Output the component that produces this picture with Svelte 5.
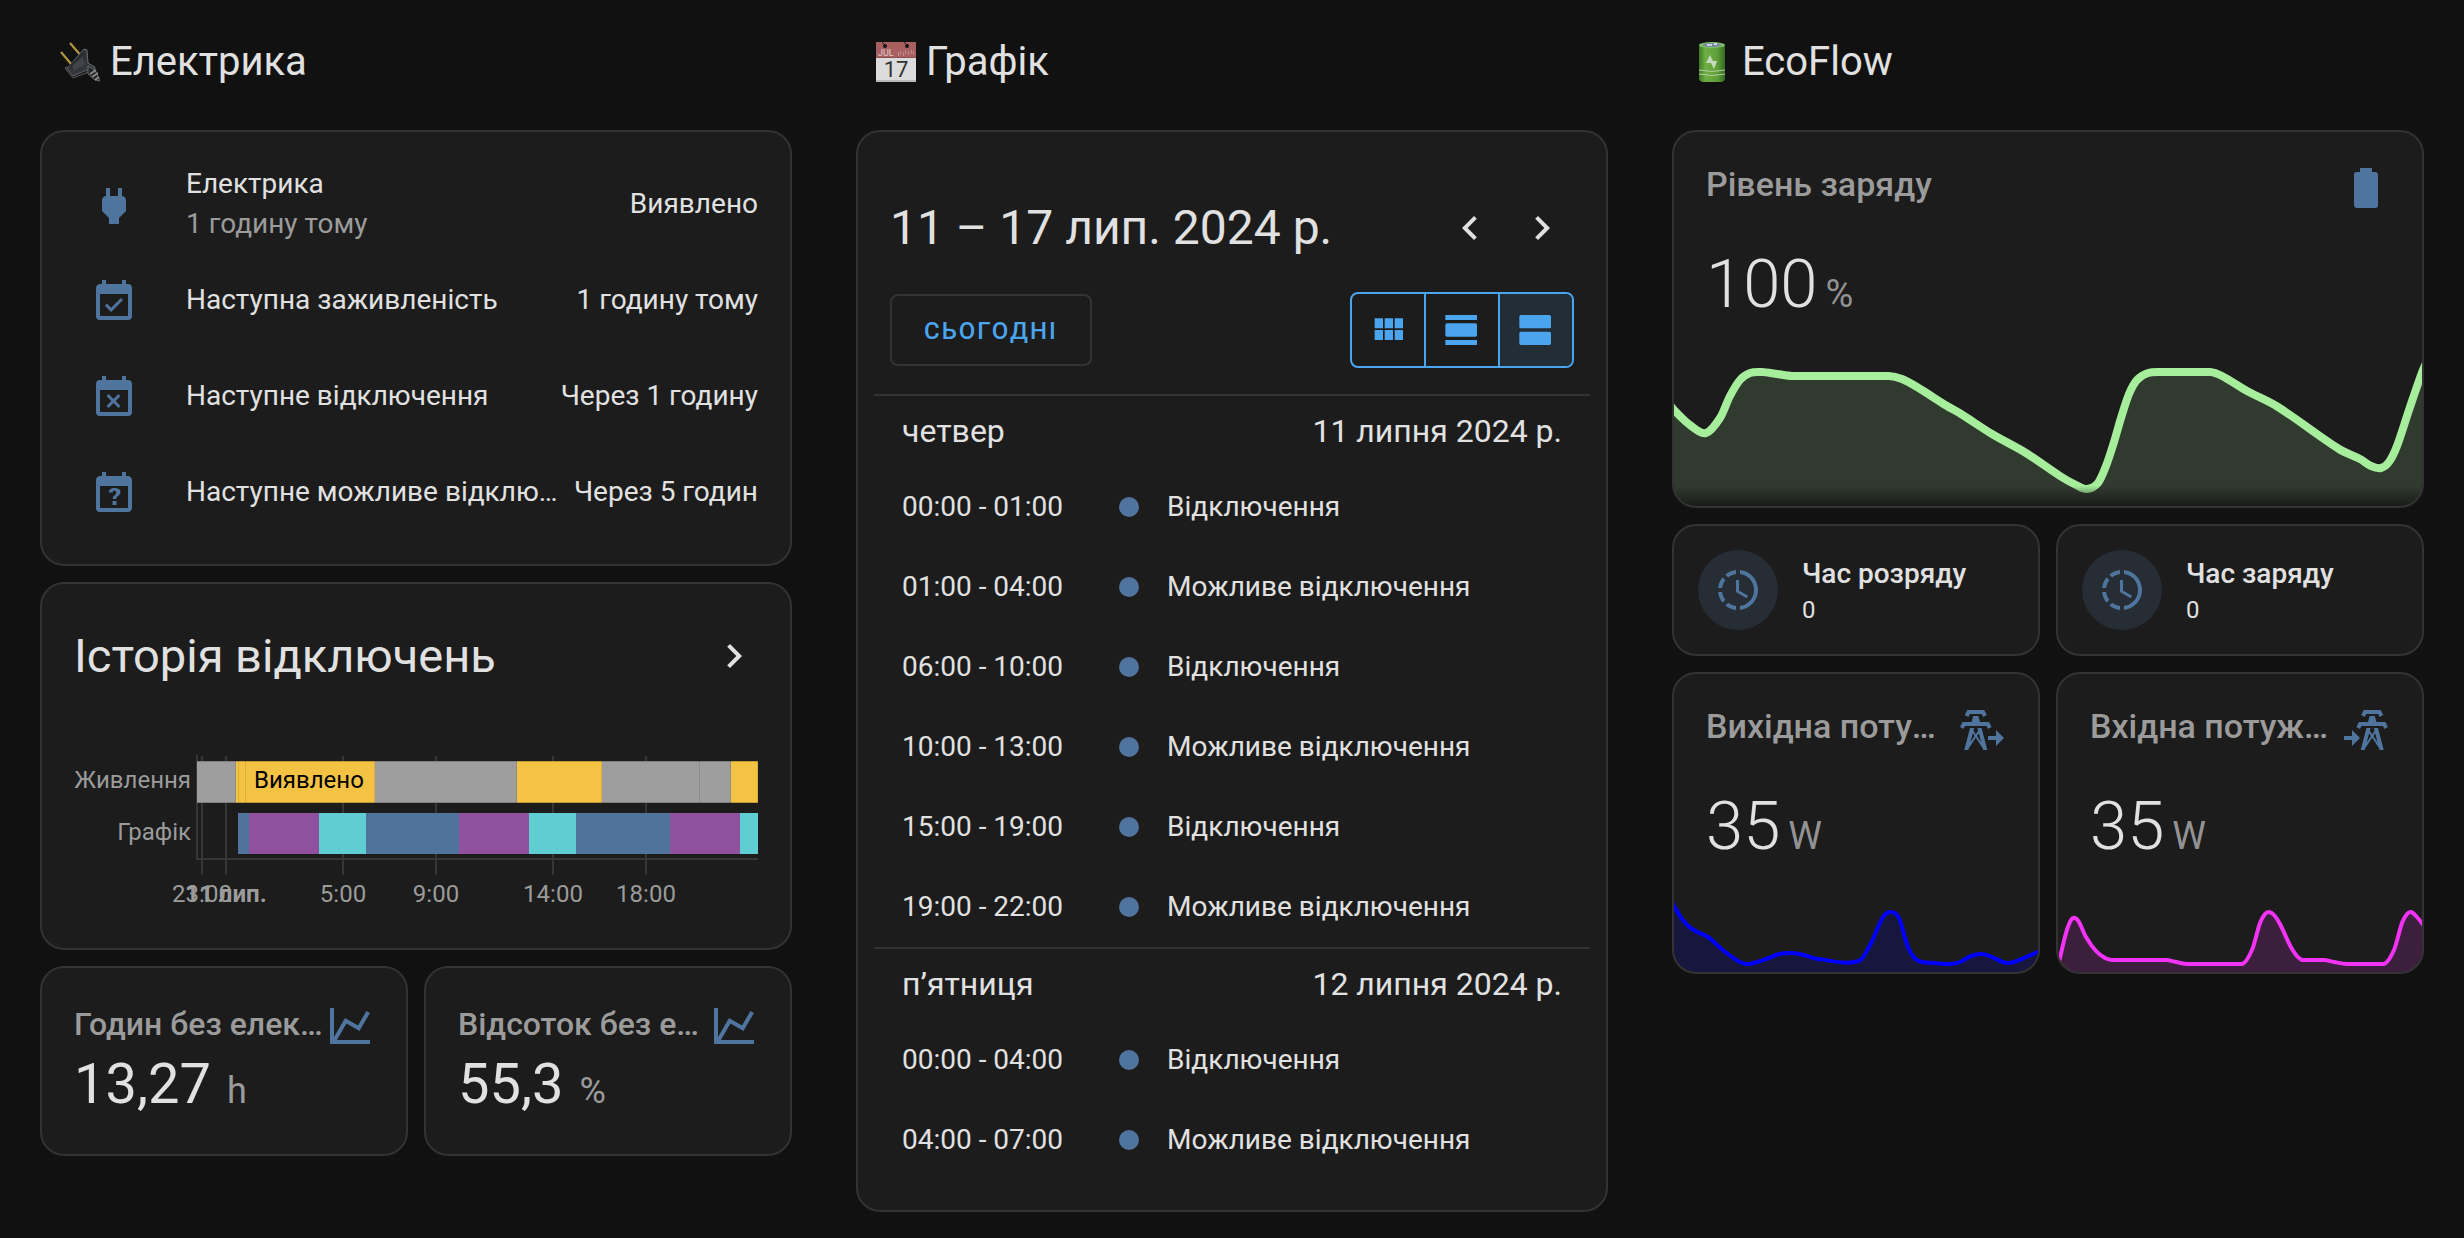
<script>
  const icons = {
    plug: 'M16,7V3H14V7H10V3H8V7H8C7,7 6,8 6,9V14.5L9.5,18V21H14.5V18L18,14.5V9C18,8 17,7 16,7Z',
    calendarCheck:
      'M19,19H5V8H19M19,3H18V1H16V3H8V1H6V3H5C3.89,3 3,3.9 3,5V19A2,2 0 0,0 5,21H19A2,2 0 0,0 21,19V5A2,2 0 0,0 19,3M16.53,11.06L15.47,10L10.59,14.88L8.47,12.76L7.41,13.82L10.59,17L16.53,11.06Z',
    calendarRemove:
      'M19,19H5V8H19M19,3H18V1H16V3H8V1H6V3H5A2,2 0 0,0 3,5V19A2,2 0 0,0 5,21H19A2,2 0 0,0 21,19V5A2,2 0 0,0 19,3M9.31,17L11.75,14.56L14.19,17L15.25,15.94L12.81,13.5L15.25,11.06L14.19,10L11.75,12.44L9.31,10L8.25,11.06L10.69,13.5L8.25,15.94L9.31,17Z',
    calendarQuestion:
      'M6,1V3H5C3.89,3 3,3.89 3,5V19A2,2 0 0,0 5,21H19C20.11,21 21,20.11 21,19V5C21,3.89 20.11,3 19,3H18V1H16V3H8V1H6M5,8H19V19H5V8M12.19,9C11.32,9 10.62,9.2 10.12,9.59C9.62,10 9.37,10.53 9.37,11.23H11.32C11.33,10.97 11.41,10.77 11.56,10.63C11.71,10.49 11.92,10.42 12.19,10.42C12.47,10.42 12.7,10.5 12.86,10.66C13.02,10.82 13.1,11.03 13.1,11.3C13.1,11.56 13.04,11.78 12.92,11.97C12.8,12.16 12.64,12.33 12.44,12.5C11.99,12.86 11.7,13.15 11.57,13.4C11.44,13.65 11.38,14 11.38,14.5H13.13C13.13,14.17 13.18,13.91 13.27,13.73C13.36,13.54 13.54,13.35 13.79,13.16C14.22,12.91 14.57,12.61 14.83,12.25C15.09,11.88 15.22,11.5 15.22,11.1C15.22,10.45 14.95,9.94 14.42,9.56C13.89,9.19 13.14,9 12.19,9M11.25,15.5V17.5H13.25V15.5H11.25Z',
    chartLine: 'M16,11.78L20.24,4.45L21.97,5.45L16.74,14.5L10.23,10.75L5.46,19H22V21H2V3H4V17.54L9.5,8L16,11.78Z',
    battery:
      'M16.67,4H15V2H9V4H7.33A1.33,1.33 0 0,0 6,5.33V20.67C6,21.4 6.6,22 7.33,22H16.67A1.33,1.33 0 0,0 18,20.67V5.33C18,4.6 17.4,4 16.67,4Z',
    progressClock:
      'M13,2.03V2.05L13,4.05C17.39,4.59 20.5,8.58 19.96,12.97C19.5,16.61 16.64,19.5 13,19.93V21.93C18.5,21.38 22.5,16.5 21.95,11C21.5,6.25 17.73,2.5 13,2.03M11,2.06C9.05,2.25 7.19,3 5.67,4.26L7.1,5.74C8.22,4.84 9.57,4.26 11,4.06V2.06M4.26,5.67C3,7.19 2.25,9.04 2.05,11H4.05C4.24,9.58 4.8,8.23 5.69,7.1L4.26,5.67M2.06,13C2.26,14.96 3.03,16.81 4.27,18.33L5.69,16.9C4.81,15.77 4.24,14.42 4.06,13H2.06M7.1,18.37L5.67,19.74C7.18,21 9.04,21.79 11,22V20C9.58,19.82 8.23,19.25 7.1,18.37M12.5,7V12.25L17,14.92L16.25,16.15L11,13V7H12.5Z',
    towerExport:
      'M5.18,5.45L3.4,4.55L4.66,2H13.13L14.4,4.55L12.62,5.44L11.9,4H5.9L5.18,5.45M15.52,8H10.99L10.2,5H7.6L6.81,8H2.28L1,10.55L2.79,11.44L3.52,10H14.28L15,11.45L16.79,10.56L15.52,8M14.67,22H12.6L12.36,21.1L8.9,15.9L5.43,21.1L5.2,22H3.13L6.02,11H8.09L7.73,12.35L8.9,14.1L10.06,12.35L9.71,11H11.78L14.67,22M8.3,15L7.4,13.65L6.22,18.13L8.3,15M11.58,18.12L10.4,13.64L9.5,15L11.58,18.12M23,16L19,12V15H15V17H19V20L23,16Z',
    towerImport:
      'M11.38,5.45L9.6,4.55L10.86,2H19.33L20.6,4.55L18.82,5.44L18.1,4H12.1L11.38,5.45M21.72,8H17.19L16.4,5H13.8L13.01,8H8.48L7.2,10.55L8.99,11.44L9.72,10H20.48L21.2,11.45L22.99,10.56L21.72,8M20.87,22H18.8L18.56,21.1L15.1,15.9L11.63,21.1L11.4,22H9.33L12.22,11H14.29L13.93,12.35L15.1,14.1L16.26,12.35L15.91,11H17.98L20.87,22M14.5,15L13.6,13.65L12.42,18.13L14.5,15M17.78,18.12L16.6,13.64L15.7,15L17.78,18.12M9,16L5,12V15H1V17H5V20L9,16Z',
    chevronLeft: 'M15.41,16.58L10.83,12L15.41,7.41L14,6L8,12L14,18L15.41,16.58Z',
    chevronRight: 'M8.59,16.58L13.17,12L8.59,7.41L10,6L16,12L10,18L8.59,16.58Z',
    viewModule: 'M16,5V11H21V5M10,11H15V5H10M16,18H21V12H16M10,18H15V12H10M4,18H9V12H4M4,11H9V5H4V11Z',
    viewDay: 'M2,3V6H21V3M20,8H3A1,1 0 0,0 2,9V15A1,1 0 0,0 3,16H20A1,1 0 0,0 21,15V9A1,1 0 0,0 20,8M2,21H21V18H2V21Z',
    viewAgenda:
      'M20,3H3C2.45,3 2,3.45 2,4V10C2,10.55 2.45,11 3,11H20C20.55,11 21,10.55 21,10V4C21,3.45 20.55,3 20,3M20,13H3C2.45,13 2,13.45 2,14V20C2,20.55 2.45,21 3,21H20C20.55,21 21,20.55 21,20V14C21,13.45 20.55,13 20,13Z'
  }

  const entities = [
    { icon: 'plug', name: 'Електрика', secondary: '1 годину тому', state: 'Виявлено' },
    { icon: 'calendarCheck', name: 'Наступна заживленість', state: '1 годину тому' },
    { icon: 'calendarRemove', name: 'Наступне відключення', state: 'Через 1 годину' },
    { icon: 'calendarQuestion', name: 'Наступне можливе відключення', state: 'Через 5 годин' }
  ]

  const ON = '#f4c344'
  const OFF = '#9e9e9e'
  const BLUE = '#4f739b'
  const PURPLE = '#8f519e'
  const TEAL = '#5fced3'

  // [start, end, colour]
  const power = [
    [123, 162, OFF],
    [162, 165, ON],
    [165, 172, ON],
    [172, 301, ON],
    [301, 443, OFF],
    [443, 528, ON],
    [528, 626, OFF],
    [626, 657, OFF],
    [657, 684, ON]
  ]
  const plan = [
    [164, 175, BLUE],
    [175, 245, PURPLE],
    [245, 292, TEAL],
    [292, 385, BLUE],
    [385, 455, PURPLE],
    [455, 502, TEAL],
    [502, 596, BLUE],
    [596, 666, PURPLE],
    [666, 684, TEAL]
  ]
  const ticks = [
    { x: 128, label: '23:00' },
    { x: 152, label: '11 лип.', bold: true },
    { x: 269, label: '5:00' },
    { x: 362, label: '9:00' },
    { x: 479, label: '14:00' },
    { x: 572, label: '18:00' }
  ]

  const stats = [
    { name: 'Годин без електрики', value: '13,27', unit: 'h' },
    { name: 'Відсоток без електрики', value: '55,3', unit: '%' }
  ]

  const views = [
    { id: 'month', icon: 'viewModule', label: 'Місяць' },
    { id: 'day', icon: 'viewDay', label: 'День' },
    { id: 'list', icon: 'viewAgenda', label: 'Список' }
  ]
  let view = 'list'

  const days = [
    {
      day: 'четвер',
      date: '11 липня 2024 р.',
      events: [
        ['00:00 - 01:00', 'Відключення'],
        ['01:00 - 04:00', 'Можливе відключення'],
        ['06:00 - 10:00', 'Відключення'],
        ['10:00 - 13:00', 'Можливе відключення'],
        ['15:00 - 19:00', 'Відключення'],
        ['19:00 - 22:00', 'Можливе відключення']
      ]
    },
    {
      day: 'п’ятниця',
      date: '12 липня 2024 р.',
      events: [
        ['00:00 - 04:00', 'Відключення'],
        ['04:00 - 07:00', 'Можливе відключення']
      ]
    }
  ]

  const level = [
    [-4, 53], [0, 58], [16, 73], [32, 81], [46, 66], [56, 44], [66, 28], [76, 21], [88, 20], [103, 22],
    [118, 24], [215, 24], [228, 27], [243, 35], [273, 54], [287, 62], [318, 82], [352, 101], [386, 124],
    [402, 133], [413, 137], [424, 131], [432, 114], [440, 90], [447, 66], [455, 42], [463, 28], [474, 21],
    [488, 20], [536, 20], [548, 24], [573, 39], [604, 55], [665, 97], [686, 107], [697, 114], [707, 116],
    [715, 110], [723, 94], [735, 58], [747, 23], [752, 11]
  ]
  const output = [
    [-2, 8], [0, 12], [8, 25], [18, 35], [34, 43], [50, 57], [66, 68], [75, 70], [92, 65], [105, 60],
    [118, 59], [130, 61], [144, 65], [185, 67], [197, 49], [209, 23], [217, 18], [225, 24], [234, 53],
    [243, 66], [260, 69], [276, 70], [286, 68], [297, 62], [308, 60], [318, 63], [329, 68], [336, 69],
    [350, 64], [368, 56]
  ]
  const input = [
    [1, 68], [8, 39], [13, 26], [17, 24], [21, 28], [28, 43], [38, 57], [47, 64], [54, 66], [108, 66],
    [118, 68], [130, 70], [184, 70], [194, 56], [202, 29], [207, 20], [211, 18], [216, 21], [222, 30],
    [234, 55], [244, 66], [266, 66], [276, 68], [289, 70], [326, 70], [336, 56], [344, 29], [349, 20],
    [353, 18], [358, 22], [368, 34]
  ]

  const times = ['Час розряду', 'Час заряду']
  const powers = [
    { name: 'Вихідна потужність', icon: 'towerExport', points: output, color: '#0000ff' },
    { name: 'Вхідна потужність', icon: 'towerImport', points: input, color: '#f233f5' }
  ]

  function line(points) {
    let d = `M${points[0]}`
    for (let i = 0; i < points.length - 1; i++) {
      const p0 = points[Math.max(i - 1, 0)]
      const p1 = points[i]
      const p2 = points[i + 1]
      const p3 = points[Math.min(i + 2, points.length - 1)]
      const dx = (p2[0] - p1[0]) / 3
      const s1 = (p2[1] - p0[1]) / (p2[0] - p0[0] || 1)
      const s2 = (p3[1] - p1[1]) / (p3[0] - p1[0] || 1)
      const flat = p1[1] === p2[1]
      const y1 = flat ? p1[1] : p1[1] + s1 * dx
      const y2 = flat ? p2[1] : p2[1] - s2 * dx
      d += `C${p1[0] + dx},${y1} ${p2[0] - dx},${y2} ${p2}`
    }
    return d
  }

  function area(points, height) {
    return `${line(points)}V${height}H${points[0][0]}Z`
  }
</script>

{#snippet icon(name)}
  <svg class="icon" viewBox="0 0 24 24" aria-hidden="true"><path d={icons[name]} /></svg>
{/snippet}

<main class="dashboard">
  <section class="column">
    <h2>
      <svg class="emoji" viewBox="0 0 40 40" aria-hidden="true">
        <path d="M1 11l11 13M11 1l12 14" stroke="#1a1710" stroke-width="4" />
        <path d="M1 10l11 13M10 1l12 14" stroke="#b59a45" stroke-width="2" />
        <path d="M24 7l3 1 1 13 7 4-1 6-8-2-14 5-6-7 3-3z" fill="#33363a" stroke="#696b6d" stroke-width="1" />
        <path d="M9 24L24 8l1 13-11 8z" fill="#2a2c2f" />
        <path d="M12 24L23 14l2 8-11 7z" fill="#414549" />
        <path d="M6 25l7 9 14-6 2 2-16 6-8-10z" fill="#191a1c" stroke="#59595b" stroke-width="1" />
        <path d="M28 24l7 4 5 11-5-1-7-6z" fill="#232426" stroke="#6c6c6c" stroke-width="1" />
        <path d="M30 32l6-4M32 35l6-4M35 38l4-3" stroke="#8b8b8b" stroke-width="2" />
      </svg>
      Електрика
    </h2>

    <div class="card entities">
      {#each entities as entity}
        <div class="entity">
          <span class="badge">{@render icon(entity.icon)}</span>
          <div class="info">
            <div class="ellipsis">{entity.name}</div>
            {#if entity.secondary}
              <div class="secondary">{entity.secondary}</div>
            {/if}
          </div>
          <div class="state">{entity.state}</div>
        </div>
      {/each}
    </div>

    <div class="card history">
      <a class="history-header" href="#history">
        <h1>Історія відключень</h1>
        {@render icon('chevronRight')}
      </a>
      <svg class="timeline" viewBox="0 0 684 160" role="img" aria-label="Історія відключень">
        <g stroke="#363636" stroke-width="2">
          {#each ticks as tick}
            <path d="M{tick.x} 6V125" />
          {/each}
          <path d="M123 5V110M122 109H684" />
        </g>
        {#each power as [start, end, color]}
          <rect x={start} y="11" width={end - start} height="42" fill={color} />
          <path d="M{start} 11.5H{end}M{start} 52.5H{end}" class="edge" />
          <path d="M{end - 0.5} 11V53" class="edge side" />
        {/each}
        {#each plan as [start, end, color]}
          <rect x={start} y="63" width={end - start} height="41" fill={color} />
        {/each}
        <text x="117" y="38" text-anchor="end">Живлення</text>
        <text x="117" y="90" text-anchor="end">Графік</text>
        <text x="180" y="38" class="dark">Виявлено</text>
        {#each ticks as tick}
          <text x={tick.x} y="152" text-anchor="middle" class:bold={tick.bold}>{tick.label}</text>
        {/each}
      </svg>
    </div>

    <div class="pair">
      {#each stats as stat}
        <div class="card stat">
          <div class="stat-header">
            <div class="name ellipsis">{stat.name}</div>
            {@render icon('chartLine')}
          </div>
          <div class="stat-value">{stat.value}<span>{stat.unit}</span></div>
        </div>
      {/each}
    </div>
  </section>

  <section class="column">
    <h2>
      <svg class="emoji" viewBox="0 0 40 40" aria-hidden="true">
        <rect width="40" height="40" fill="#dcdcdc" />
        <rect width="40" height="15" fill="#a85f5f" />
        <rect y="15" width="40" height="1" fill="#8c5050" />
        <rect y="38" width="40" height="2" fill="#b9b9b9" />
        <path d="M6 0l3 3M28 0l3 3" stroke="#222" stroke-width="1" />
        <circle cx="9" cy="4" r="2" fill="#151515" />
        <circle cx="31" cy="4" r="2" fill="#151515" />
        <path d="M22 12h1M24 11h1M27 12h1M29 10h1M32 11h1M35 10h1M37 11h1" stroke="#c18c8c" stroke-width="4" />
        <text x="2" y="14" font-size="9" fill="#e2cccc">JUL</text>
        <text x="20" y="35" font-size="22" fill="#333" text-anchor="middle">17</text>
      </svg>
      Графік
    </h2>

    <div class="card calendar">
      <div class="toolbar">
        <h1>11 – 17 лип. 2024 р.</h1>
        <div class="nav">
          <button type="button" aria-label="Назад">{@render icon('chevronLeft')}</button>
          <button type="button" aria-label="Вперед">{@render icon('chevronRight')}</button>
        </div>
      </div>
      <div class="controls">
        <button type="button" class="today">СЬОГОДНІ</button>
        <div class="views">
          {#each views as item}
            <button
              type="button"
              class:active={view === item.id}
              aria-label={item.label}
              on:click={() => (view = item.id)}
            >
              {@render icon(item.icon)}
            </button>
          {/each}
        </div>
      </div>
      <table>
        {#each days as { day, date, events }}
          <tbody>
            <tr>
              <th colspan="3">
                <div class="day"><span>{day}</span><span>{date}</span></div>
              </th>
            </tr>
            {#each events as [time, title]}
              <tr>
                <td class="time">{time}</td>
                <td class="marker"><span class="dot"></span></td>
                <td class="title">{title}</td>
              </tr>
            {/each}
          </tbody>
        {/each}
      </table>
    </div>
  </section>

  <section class="column">
    <h2>
      <svg class="emoji" viewBox="0 0 40 40" aria-hidden="true">
        <defs>
          <linearGradient id="cell">
            <stop offset="0" stop-color="#3f7a28" />
            <stop offset="0.25" stop-color="#6fae45" />
            <stop offset="0.7" stop-color="#5f9f3a" />
            <stop offset="1" stop-color="#356b22" />
          </linearGradient>
        </defs>
        <path d="M7 4v33q0 2 4 3h18q4-1 4-3V4z" fill="url(#cell)" />
        <ellipse cx="20" cy="3" rx="13" ry="3" fill="#7cc766" />
        <ellipse cx="20" cy="3" rx="10" ry="2" fill="#7d8a9c" />
        <path d="M15 3h5M22 2h3" stroke="#cdd5e2" stroke-width="2" />
        <path d="M7 28q13 3 26 0M7 32q13 3 26 0" stroke="#b6cf9f" stroke-width="1" fill="none" />
        <path d="M18 13l-4 8h5l3 6 3-8h-4z" fill="#c9d9bf" />
      </svg>
      EcoFlow
    </h2>

    <div class="card graph">
      <div class="graph-header">
        <div class="name ellipsis">Рівень заряду</div>
        {@render icon('battery')}
      </div>
      <div class="graph-value">100<span>%</span></div>
      <svg class="plot" viewBox="0 0 748 154" aria-hidden="true">
        <defs>
          <linearGradient id="fade" x1="0" y1="0" x2="0" y2="1">
            <stop offset="0.87" stop-color="#fff" />
            <stop offset="1" stop-color="#000" />
          </linearGradient>
          <mask id="bottom-fade"><rect width="748" height="154" fill="url(#fade)" /></mask>
        </defs>
        <g mask="url(#bottom-fade)">
          <path d={area(level, 154)} fill="#a6ee9b" opacity="0.15" />
          <path d={line(level)} fill="none" stroke="#a6ee9b" stroke-width="8" />
        </g>
      </svg>
    </div>

    <div class="pair">
      {#each times as name}
        <div class="card tile">
          <span class="tile-icon">{@render icon('progressClock')}</span>
          <div>
            <div class="tile-name">{name}</div>
            <div class="tile-state">0</div>
          </div>
        </div>
      {/each}
    </div>

    <div class="pair">
      {#each powers as item}
        <div class="card graph">
          <div class="graph-header">
            <div class="name ellipsis">{item.name}</div>
            {@render icon(item.icon)}
          </div>
          <div class="graph-value">35<span>W</span></div>
          <svg class="plot" viewBox="0 0 364 78" aria-hidden="true">
            <path d={area(item.points, 78)} fill={item.color} opacity="0.15" />
            <path d={line(item.points)} fill="none" stroke={item.color} stroke-width="4" />
          </svg>
        </div>
      {/each}
    </div>
  </section>
</main>

<style>
  :global(body) {
    background: #111111;
  }

  .dashboard {
    display: grid;
    grid-template-columns: repeat(3, minmax(0, 1fr));
    gap: 64px;
    align-items: start;
    padding: 34px 40px 24px;
    font-family: Roboto, 'Noto Sans', sans-serif;
    font-size: 28px;
    line-height: 40px;
    color: #e1e1e1;
  }

  .column {
    display: flex;
    flex-direction: column;
    gap: 16px;
  }

  h1,
  h2 {
    margin: 0;
    font-weight: 400;
  }

  h1 {
    font-size: 48px;
    line-height: 48px;
  }

  h2 {
    display: flex;
    align-items: center;
    gap: 10px;
    padding: 0 20px 24px;
    font-size: 40px;
    line-height: 56px;
  }

  .emoji {
    width: 40px;
    height: 40px;
    flex: none;
  }

  .card {
    min-width: 0;
    background: #1c1c1c;
    border: 2px solid #333333;
    border-radius: 24px;
    overflow: hidden;
  }

  .pair {
    display: grid;
    grid-template-columns: repeat(2, minmax(0, 1fr));
    gap: 16px;
  }

  .icon {
    display: block;
    flex: none;
    width: 48px;
    height: 48px;
    fill: currentColor;
  }

  .ellipsis {
    min-width: 0;
    white-space: nowrap;
    overflow: hidden;
    text-overflow: ellipsis;
  }

  .name {
    flex: 1;
    font-weight: 500;
    color: #9b9b9b;
  }

  .stat .icon,
  .graph .icon,
  .badge,
  .tile-icon {
    color: #4f749d;
  }

  /* entities */
  .entities {
    display: flex;
    flex-direction: column;
    gap: 16px;
    padding: 32px;
  }

  .entity {
    display: flex;
    align-items: center;
    min-height: 80px;
  }

  .badge {
    display: flex;
    justify-content: center;
    width: 80px;
    margin-right: 32px;
    padding-top: 4px;
  }

  .info {
    flex: 1;
    min-width: 0;
    margin-right: 16px;
  }

  .secondary {
    color: #9b9b9b;
  }

  .state {
    white-space: nowrap;
  }

  /* history */
  .history {
    padding: 48px 32px 38px;
  }

  .history-header {
    display: flex;
    justify-content: space-between;
    align-items: center;
    margin-bottom: 70px;
    color: inherit;
    text-decoration: none;
  }

  .history-header h1 {
    font-size: 47px;
  }

  .timeline {
    display: block;
    width: 100%;
    overflow: visible;
  }

  .timeline text {
    font-size: 24px;
    fill: #9b9b9b;
  }

  .timeline .dark {
    fill: #000000;
  }

  .timeline .bold {
    font-weight: 700;
  }

  .edge {
    stroke: #000000;
    stroke-opacity: 0.2;
    fill: none;
  }

  .side {
    stroke-opacity: 0.1;
  }

  /* statistics */
  .stat {
    padding: 34px 32px 42px;
  }

  .stat-header {
    display: flex;
    height: 54px;
  }

  .stat .name {
    font-size: 32px;
    line-height: 44px;
  }

  .stat-value {
    font-size: 56px;
    line-height: 56px;
  }

  .stat-value span {
    margin-left: 16px;
    font-size: 36px;
    line-height: 36px;
    color: #9b9b9b;
  }

  /* calendar */
  .calendar {
    padding: 72px 16px 30px;
  }

  .toolbar,
  .controls {
    display: flex;
    justify-content: space-between;
    align-items: center;
    padding: 0 16px;
  }

  .toolbar {
    margin-bottom: 40px;
  }

  .controls {
    margin-bottom: 26px;
  }

  .nav {
    display: flex;
    gap: 8px;
  }

  button {
    display: flex;
    justify-content: center;
    align-items: center;
    padding: 0;
    border: none;
    background: none;
    color: inherit;
    font-family: inherit;
    cursor: pointer;
  }

  .nav button {
    width: 64px;
    height: 48px;
  }

  .today {
    height: 72px;
    padding: 2px 32px 0;
    border: 2px solid #333333;
    border-radius: 8px;
    font-size: 24px;
    font-weight: 500;
    letter-spacing: 2px;
    color: #4ba5ee;
  }

  .views {
    display: flex;
    border: 2px solid #4ba5ee;
    border-radius: 8px;
    overflow: hidden;
    color: #4ba5ee;
  }

  .views button {
    width: 72px;
    height: 72px;
  }

  .views button + button {
    width: 74px;
    border-left: 2px solid #4ba5ee;
  }

  .views .active {
    background: #232d36;
  }

  .views .icon {
    width: 40px;
    height: 40px;
  }

  table {
    width: 100%;
    border-spacing: 0;
  }

  th {
    padding: 0 28px;
    border-top: 2px solid #333333;
    font-weight: 400;
    font-size: 32px;
    line-height: 71px;
  }

  .day {
    display: flex;
    justify-content: space-between;
  }

  td {
    height: 80px;
    padding: 0;
  }

  .time {
    width: 1px;
    padding: 0 28px;
    white-space: nowrap;
  }

  .marker {
    width: 20px;
    padding: 0 28px;
  }

  .dot {
    display: block;
    width: 20px;
    height: 20px;
    border-radius: 50%;
    background: #4f749d;
  }

  /* graphs */
  .graph-header {
    display: flex;
    gap: 8px;
    padding: 32px 32px 0;
  }

  .graph .name {
    font-size: 34px;
    line-height: 40px;
  }

  .graph-value {
    padding: 32px 32px 28px;
    font-size: 67px;
    line-height: 80px;
    font-weight: 300;
  }

  .graph-value span {
    margin-left: 8px;
    font-size: 38px;
    line-height: 40px;
    font-weight: 400;
    color: #929292;
  }

  .plot {
    display: block;
    width: 100%;
  }

  /* tiles */
  .tile {
    display: flex;
    align-items: center;
    gap: 24px;
    padding: 24px;
  }

  .tile-icon {
    display: flex;
    justify-content: center;
    align-items: center;
    width: 80px;
    height: 80px;
    border-radius: 50%;
    background: #262d34;
  }

  .tile-name {
    line-height: 40px;
    font-weight: 500;
  }

  .tile-state {
    font-size: 24px;
    line-height: 32px;
  }
</style>
